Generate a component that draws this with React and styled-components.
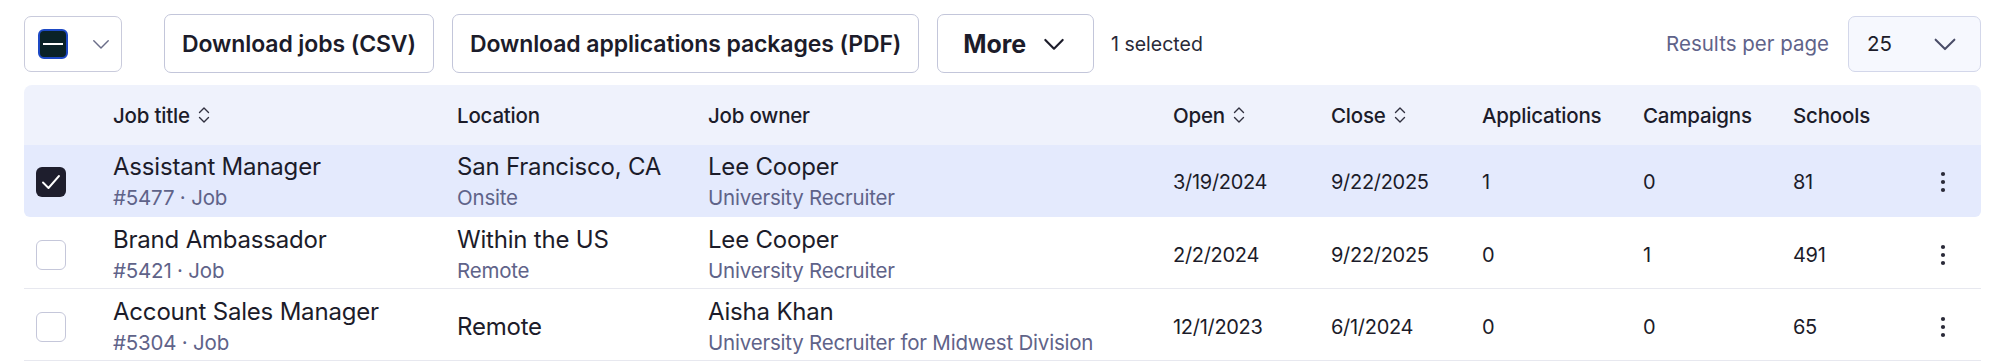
import React from 'react';
import styled, { createGlobalStyle } from 'styled-components';

const GlobalStyle = createGlobalStyle`
    body {
        margin: 0;
        background: #ffffff;
        font-family: Inter, "Liberation Sans", sans-serif;
        color: #1c1c2a;
    }
`

const Page = styled.div`
    padding: 14px 13px 0 24px;
`

const Toolbar = styled.div`
    display: flex;
    align-items: center;
    height: 59px;
`

const SelectAll = styled.div`
    display: flex;
    align-items: center;
    justify-content: space-between;
    box-sizing: border-box;
    width: 98px;
    height: 56px;
    padding: 0 10px 0 13px;
    border: 1px solid #c9cbdc;
    border-radius: 7px;
    margin-right: 42px;
`

const Box = styled.div`
    box-sizing: border-box;
    width: 30px;
    height: 30px;
    border-radius: 6px;
    display: flex;
    align-items: center;
    justify-content: center;
    background: ${props => props.bg || '#ffffff'};
    border: ${props => props.border || '1.5px solid #c5c7da'};
`

const Dash = styled.div`
    width: 20px;
    height: 2px;
    background: #ffffff;
`

const Button = styled.button`
    box-sizing: border-box;
    height: 59px;
    padding: ${props => props.pad || '0 17px'};
    margin-right: ${props => props.marginRight || '18px'};
    border: 1px solid #c3c6da;
    border-radius: 7px;
    background: #ffffff;
    font-family: Inter, "Liberation Sans", sans-serif;
    font-size: ${props => props.size || '23px'};
    font-weight: ${props => props.weight || 600};
    letter-spacing: -0.1px;
    color: #1c1c2a;
    display: flex;
    align-items: center;
    gap: 16px;
`

const Selected = styled.span`
    font-size: 19.5px;
    color: #2a2a38;
`

const Spacer = styled.div`
    flex: 1;
`

const PerPageLabel = styled.span`
    font-size: 20.5px;
    color: #5f6389;
    margin-right: 19px;
`

const PerPage = styled.div`
    box-sizing: border-box;
    width: 133px;
    height: 56px;
    border: 1px solid #d3d7ea;
    border-radius: 7px;
    background: #f6f8fe;
    display: flex;
    align-items: center;
    justify-content: space-between;
    padding: 0 22px 0 18px;
    font-size: 20.5px;
    color: #1c1c2a;
`

const Table = styled.div`
    margin-top: 12px;
`

const cols = '89px 344px 251px 465px 158px 151px 161px 150px 1fr 80px';

const HeaderRow = styled.div`
    display: grid;
    grid-template-columns: ${cols};
    align-items: center;
    height: 60px;
    background: #eff2fc;
    border-radius: 8px 8px 0 0;
`

const HeaderCell = styled.div`
    display: flex;
    align-items: center;
    gap: 8px;
    font-size: 20.5px;
    font-weight: 500;
    letter-spacing: -0.2px;
    color: #1c1c2a;
`

const Row = styled.div`
    display: grid;
    grid-template-columns: ${cols};
    align-items: center;
    box-sizing: border-box;
    height: 72px;
    padding-top: ${props => props.selected ? '1px' : '4px'};
    background: ${props => props.selected ? '#e4eafd' : '#ffffff'};
    border-bottom: ${props => props.selected ? 'none' : '1px solid #e7e8ef'};
    border-radius: ${props => props.selected ? '0 0 6px 6px' : '0'};
`

const CheckCell = styled.div`
    padding-left: 12px;
`

const Stack = styled.div`
    display: flex;
    flex-direction: column;
    gap: 3px;
`

const Primary = styled.div`
    font-size: 24px;
    letter-spacing: -0.2px;
    color: #1c1c2a;
    line-height: 30px;
    white-space: nowrap;
`

const Secondary = styled.div`
    font-size: 20.5px;
    letter-spacing: -0.2px;
    color: #5f6389;
    line-height: 26px;
    white-space: nowrap;
`

const Cell = styled.div`
    font-size: 20px;
    letter-spacing: -0.3px;
    color: #1c1c2a;
`

const KebabCell = styled.div`
    display: flex;
    justify-content: flex-end;
    padding-right: 35px;
`

const Chevron = ({ size = 18, color = '#5b5e7a', width = 1.6 }) => (
    <svg width={size} height={size} viewBox="0 0 18 18" fill="none">
        <path d="M2.5 6 L9 12.5 L15.5 6" stroke={color} strokeWidth={width} strokeLinecap="round" strokeLinejoin="round" />
    </svg>
)

const SortIcon = () => (
    <svg width="12" height="20" viewBox="0 0 12 20" fill="none">
        <path d="M1.5 7.5 L6 3 L10.5 7.5" stroke="#30303f" strokeWidth="1.4" strokeLinecap="round" strokeLinejoin="round" />
        <path d="M1.5 12.5 L6 17 L10.5 12.5" stroke="#30303f" strokeWidth="1.4" strokeLinecap="round" strokeLinejoin="round" />
    </svg>
)

const Kebab = () => (
    <svg width="6" height="22" viewBox="0 0 6 22">
        <circle cx="3" cy="3" r="2.1" fill="#2a2a38" />
        <circle cx="3" cy="11" r="2.1" fill="#2a2a38" />
        <circle cx="3" cy="19" r="2.1" fill="#2a2a38" />
    </svg>
)

const Check = () => (
    <svg width="24" height="24" viewBox="0 0 24 24" fill="none">
        <path d="M4 12.5 L9.5 18 L20 6" stroke="#ffffff" strokeWidth="1.9" strokeLinecap="round" strokeLinejoin="round" />
    </svg>
)

const jobs = [
    { title: 'Assistant Manager', id: '#5477 · Job', loc: 'San Francisco, CA', locType: 'Onsite', owner: 'Lee Cooper', role: 'University Recruiter', open: '3/19/2024', close: '9/22/2025', apps: '1', campaigns: '0', schools: '81', selected: true },
    { title: 'Brand Ambassador', id: '#5421 · Job', loc: 'Within the US', locType: 'Remote', owner: 'Lee Cooper', role: 'University Recruiter', open: '2/2/2024', close: '9/22/2025', apps: '0', campaigns: '1', schools: '491' },
    { title: 'Account Sales Manager', id: '#5304 · Job', loc: 'Remote', owner: 'Aisha Khan', role: 'University Recruiter for Midwest Division', open: '12/1/2023', close: '6/1/2024', apps: '0', campaigns: '0', schools: '65' },
]

export default function App() {
    return (
        <>
            <GlobalStyle />
            <Page>
                <Toolbar>
                    <SelectAll>
                        <Box bg="#0a2227" border="2px solid #1d49c4">
                            <Dash />
                        </Box>
                        <Chevron size={20} color="#6a6d88" width={1.3} />
                    </SelectAll>
                    <Button>Download jobs (CSV)</Button>
                    <Button>Download applications packages (PDF)</Button>
                    <Button size="25px" weight={700} pad="0 27px 0 25px" marginRight="17px">
                        More
                        <Chevron size={24} color="#1c1c2a" width={1.6} />
                    </Button>
                    <Selected>1 selected</Selected>
                    <Spacer />
                    <PerPageLabel>Results per page</PerPageLabel>
                    <PerPage>
                        25
                        <Chevron size={26} color="#4a4d68" width={1.4} />
                    </PerPage>
                </Toolbar>
                <Table>
                    <HeaderRow>
                        <div />
                        <HeaderCell>Job title <SortIcon /></HeaderCell>
                        <HeaderCell>Location</HeaderCell>
                        <HeaderCell>Job owner</HeaderCell>
                        <HeaderCell>Open <SortIcon /></HeaderCell>
                        <HeaderCell>Close <SortIcon /></HeaderCell>
                        <HeaderCell>Applications</HeaderCell>
                        <HeaderCell>Campaigns</HeaderCell>
                        <HeaderCell>Schools</HeaderCell>
                        <div />
                    </HeaderRow>
                    {jobs.map(job => (
                        <Row key={job.id} selected={job.selected}>
                            <CheckCell>
                                {job.selected
                                    ? <Box bg="#1e1e2d" border="none"><Check /></Box>
                                    : <Box />}
                            </CheckCell>
                            <Stack>
                                <Primary>{job.title}</Primary>
                                <Secondary>{job.id}</Secondary>
                            </Stack>
                            <Stack>
                                <Primary>{job.loc}</Primary>
                                {job.locType && <Secondary>{job.locType}</Secondary>}
                            </Stack>
                            <Stack>
                                <Primary>{job.owner}</Primary>
                                <Secondary>{job.role}</Secondary>
                            </Stack>
                            <Cell>{job.open}</Cell>
                            <Cell>{job.close}</Cell>
                            <Cell>{job.apps}</Cell>
                            <Cell>{job.campaigns}</Cell>
                            <Cell>{job.schools}</Cell>
                            <KebabCell><Kebab /></KebabCell>
                        </Row>
                    ))}
                </Table>
            </Page>
        </>
    )
}
